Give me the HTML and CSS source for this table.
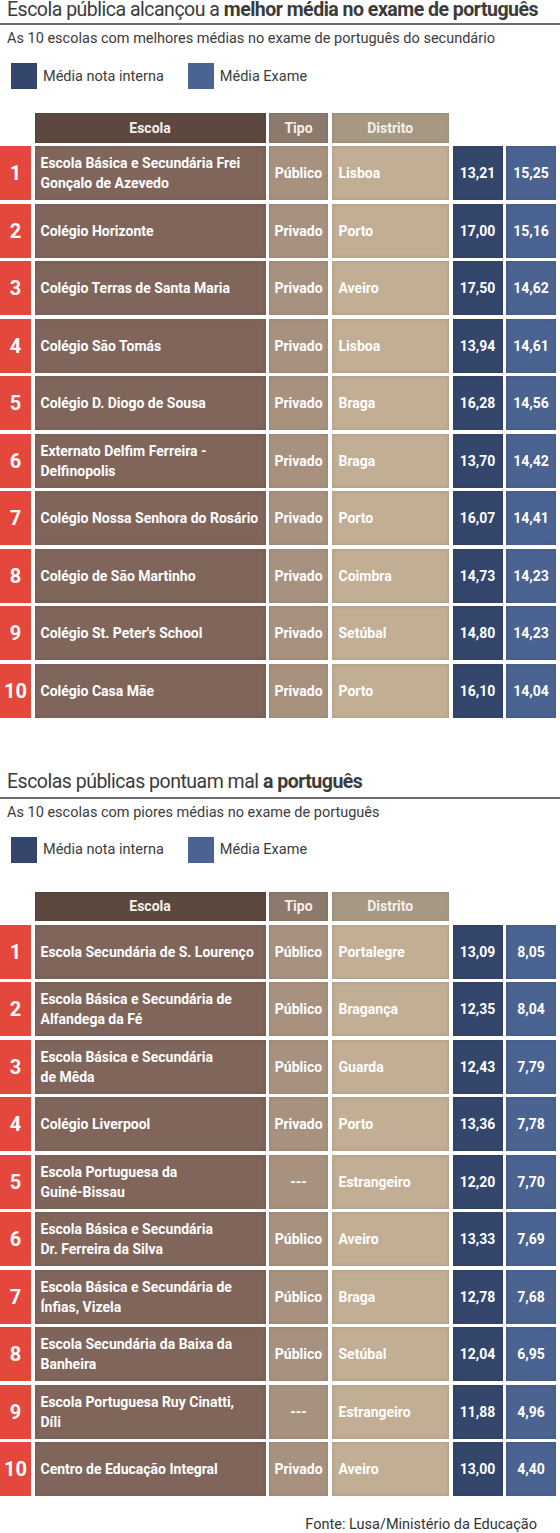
FILE: index.html
```
<!DOCTYPE html>
<html lang="pt">

<head>
  <meta charset="UTF-8" />
  <meta name="viewport" content="width=device-width, initial-scale=1.0" />
  <title>Médias no exame de português</title>
  <link rel="stylesheet" href="styles.css">
</head>

<body>
  <!-- melhores médias -->
  <section class="chart">
    <h1 class="chart-title">Escola pública alcançou a <strong>melhor média no exame de português</strong></h1>
    <p class="chart-sub">As 10 escolas com melhores médias no exame de português do secundário</p>
    <div class="legend">
      <span class="legend-item"><i class="swatch interna"></i>Média nota interna</span>
      <span class="legend-item"><i class="swatch exame"></i>Média Exame</span>
    </div>
    <div class="rank">
      <div class="head h-escola">Escola</div>
      <div class="head h-tipo">Tipo</div>
      <div class="head h-distrito">Distrito</div>

      <div class="num">1</div>
      <div class="cell escola">Escola Básica e Secundária Frei<br>Gonçalo de Azevedo</div>
      <div class="cell tipo">Público</div>
      <div class="cell distrito">Lisboa</div>
      <div class="cell interna">13,21</div>
      <div class="cell exame">15,25</div>

      <div class="num">2</div>
      <div class="cell escola">Colégio Horizonte</div>
      <div class="cell tipo">Privado</div>
      <div class="cell distrito">Porto</div>
      <div class="cell interna">17,00</div>
      <div class="cell exame">15,16</div>

      <div class="num">3</div>
      <div class="cell escola">Colégio Terras de Santa Maria</div>
      <div class="cell tipo">Privado</div>
      <div class="cell distrito">Aveiro</div>
      <div class="cell interna">17,50</div>
      <div class="cell exame">14,62</div>

      <div class="num">4</div>
      <div class="cell escola">Colégio São Tomás</div>
      <div class="cell tipo">Privado</div>
      <div class="cell distrito">Lisboa</div>
      <div class="cell interna">13,94</div>
      <div class="cell exame">14,61</div>

      <div class="num">5</div>
      <div class="cell escola">Colégio D. Diogo de Sousa</div>
      <div class="cell tipo">Privado</div>
      <div class="cell distrito">Braga</div>
      <div class="cell interna">16,28</div>
      <div class="cell exame">14,56</div>

      <div class="num">6</div>
      <div class="cell escola">Externato Delfim Ferreira -<br>Delfinopolis</div>
      <div class="cell tipo">Privado</div>
      <div class="cell distrito">Braga</div>
      <div class="cell interna">13,70</div>
      <div class="cell exame">14,42</div>

      <div class="num">7</div>
      <div class="cell escola">Colégio Nossa Senhora do Rosário</div>
      <div class="cell tipo">Privado</div>
      <div class="cell distrito">Porto</div>
      <div class="cell interna">16,07</div>
      <div class="cell exame">14,41</div>

      <div class="num">8</div>
      <div class="cell escola">Colégio de São Martinho</div>
      <div class="cell tipo">Privado</div>
      <div class="cell distrito">Coimbra</div>
      <div class="cell interna">14,73</div>
      <div class="cell exame">14,23</div>

      <div class="num">9</div>
      <div class="cell escola">Colégio St. Peter's School</div>
      <div class="cell tipo">Privado</div>
      <div class="cell distrito">Setúbal</div>
      <div class="cell interna">14,80</div>
      <div class="cell exame">14,23</div>

      <div class="num">10</div>
      <div class="cell escola">Colégio Casa Mãe</div>
      <div class="cell tipo">Privado</div>
      <div class="cell distrito">Porto</div>
      <div class="cell interna">16,10</div>
      <div class="cell exame">14,04</div>
    </div>
  </section>

  <!-- piores médias -->
  <section class="chart chart-second">
    <h1 class="chart-title">Escolas públicas pontuam mal <strong>a português</strong></h1>
    <p class="chart-sub">As 10 escolas com piores médias no exame de português</p>
    <div class="legend">
      <span class="legend-item"><i class="swatch interna"></i>Média nota interna</span>
      <span class="legend-item"><i class="swatch exame"></i>Média Exame</span>
    </div>
    <div class="rank">
      <div class="head h-escola">Escola</div>
      <div class="head h-tipo">Tipo</div>
      <div class="head h-distrito">Distrito</div>

      <div class="num">1</div>
      <div class="cell escola">Escola Secundária de S. Lourenço</div>
      <div class="cell tipo">Público</div>
      <div class="cell distrito">Portalegre</div>
      <div class="cell interna">13,09</div>
      <div class="cell exame">8,05</div>

      <div class="num">2</div>
      <div class="cell escola">Escola Básica e Secundária de<br>Alfandega da Fé</div>
      <div class="cell tipo">Público</div>
      <div class="cell distrito">Bragança</div>
      <div class="cell interna">12,35</div>
      <div class="cell exame">8,04</div>

      <div class="num">3</div>
      <div class="cell escola">Escola Básica e Secundária<br>de Mêda</div>
      <div class="cell tipo">Público</div>
      <div class="cell distrito">Guarda</div>
      <div class="cell interna">12,43</div>
      <div class="cell exame">7,79</div>

      <div class="num">4</div>
      <div class="cell escola">Colégio Liverpool</div>
      <div class="cell tipo">Privado</div>
      <div class="cell distrito">Porto</div>
      <div class="cell interna">13,36</div>
      <div class="cell exame">7,78</div>

      <div class="num">5</div>
      <div class="cell escola">Escola Portuguesa da<br>Guiné-Bissau</div>
      <div class="cell tipo">---</div>
      <div class="cell distrito">Estrangeiro</div>
      <div class="cell interna">12,20</div>
      <div class="cell exame">7,70</div>

      <div class="num">6</div>
      <div class="cell escola">Escola Básica e Secundária<br>Dr. Ferreira da Silva</div>
      <div class="cell tipo">Público</div>
      <div class="cell distrito">Aveiro</div>
      <div class="cell interna">13,33</div>
      <div class="cell exame">7,69</div>

      <div class="num">7</div>
      <div class="cell escola">Escola Básica e Secundária de<br>Ínfias, Vizela</div>
      <div class="cell tipo">Público</div>
      <div class="cell distrito">Braga</div>
      <div class="cell interna">12,78</div>
      <div class="cell exame">7,68</div>

      <div class="num">8</div>
      <div class="cell escola">Escola Secundária da Baixa da<br>Banheira</div>
      <div class="cell tipo">Público</div>
      <div class="cell distrito">Setúbal</div>
      <div class="cell interna">12,04</div>
      <div class="cell exame">6,95</div>

      <div class="num">9</div>
      <div class="cell escola">Escola Portuguesa Ruy Cinatti,<br>Díli</div>
      <div class="cell tipo">---</div>
      <div class="cell distrito">Estrangeiro</div>
      <div class="cell interna">11,88</div>
      <div class="cell exame">4,96</div>

      <div class="num">10</div>
      <div class="cell escola">Centro de Educação Integral</div>
      <div class="cell tipo">Privado</div>
      <div class="cell distrito">Aveiro</div>
      <div class="cell interna">13,00</div>
      <div class="cell exame">4,40</div>
    </div>
  </section>

  <p class="source">Fonte: Lusa/Ministério da Educação</p>
</body>

</html>
```

FILE: styles.css
```
* {
  margin: 0;
  padding: 0;
  box-sizing: border-box;
}

body {
  width: 560px;
  font-family: Roboto, "Liberation Sans", sans-serif;
  color: #3b3b3b;
  background-color: #fff;
}

.chart-second {
  margin-top: 54px;
}

.chart-title {
  font-size: 19.5px;
  font-weight: 400;
  letter-spacing: -0.5px;
  line-height: 20px;
  padding: 0 0 3px 7px;
  border-bottom: 2px solid #6b6b6b;
  white-space: nowrap;
}

.chart-second .chart-title {
  padding-bottom: 5px;
}

.chart-title strong {
  font-weight: 700;
}

.chart-sub {
  font-size: 14.5px;
  line-height: 20px;
  margin-top: 4px;
  padding-left: 7px;
}

.legend {
  display: flex;
  gap: 24px;
  margin-top: 14px;
  padding-left: 11px;
  font-size: 14.5px;
}

.legend-item {
  display: flex;
  align-items: center;
  gap: 6px;
}

.swatch {
  display: block;
  width: 26px;
  height: 26px;
}

.swatch.interna {
  background-color: #34466b;
}

.swatch.exame {
  background-color: #4b6391;
}

/* tabela */
.rank {
  display: grid;
  grid-template-columns: 31px 231px 59px 117.5px 50px 50px;
  grid-template-rows: 29.5px;
  grid-auto-rows: 54px;
  gap: 3.5px;
  margin-top: 24px;
  color: #fff;
  font-size: 14px;
  font-weight: 700;
}

.chart-second .rank {
  margin-top: 29px;
}

.head {
  display: flex;
  align-items: center;
  justify-content: center;
  color: #f4efea;
  box-shadow: inset 0 0 3px rgba(0, 0, 0, 0.15);
}

.h-escola {
  grid-column: 2;
  background-color: #5d4840;
}

.h-tipo {
  background-color: #8c7a6d;
}

.h-distrito {
  background-color: #a69883;
}

.num {
  grid-column: 1;
  display: flex;
  align-items: center;
  justify-content: center;
  background-color: #e4483c;
  font-size: 20px;
}

.cell {
  display: flex;
  align-items: center;
  line-height: 20px;
  box-shadow: inset 0 0 4px rgba(0, 0, 0, 0.12);
}

.escola {
  padding-left: 6px;
  background-color: #80655b;
}

.tipo {
  justify-content: center;
  background-color: #a8917f;
}

.distrito {
  padding-left: 7px;
  background-color: #c2ae94;
}

.interna {
  justify-content: center;
  background-color: #34466b;
}

.exame {
  justify-content: center;
  background-color: #4b6391;
}

.source {
  margin-top: 19px;
  padding-right: 23px;
  text-align: right;
  font-size: 14.5px;
  line-height: 20px;
  color: #333;
}
```
